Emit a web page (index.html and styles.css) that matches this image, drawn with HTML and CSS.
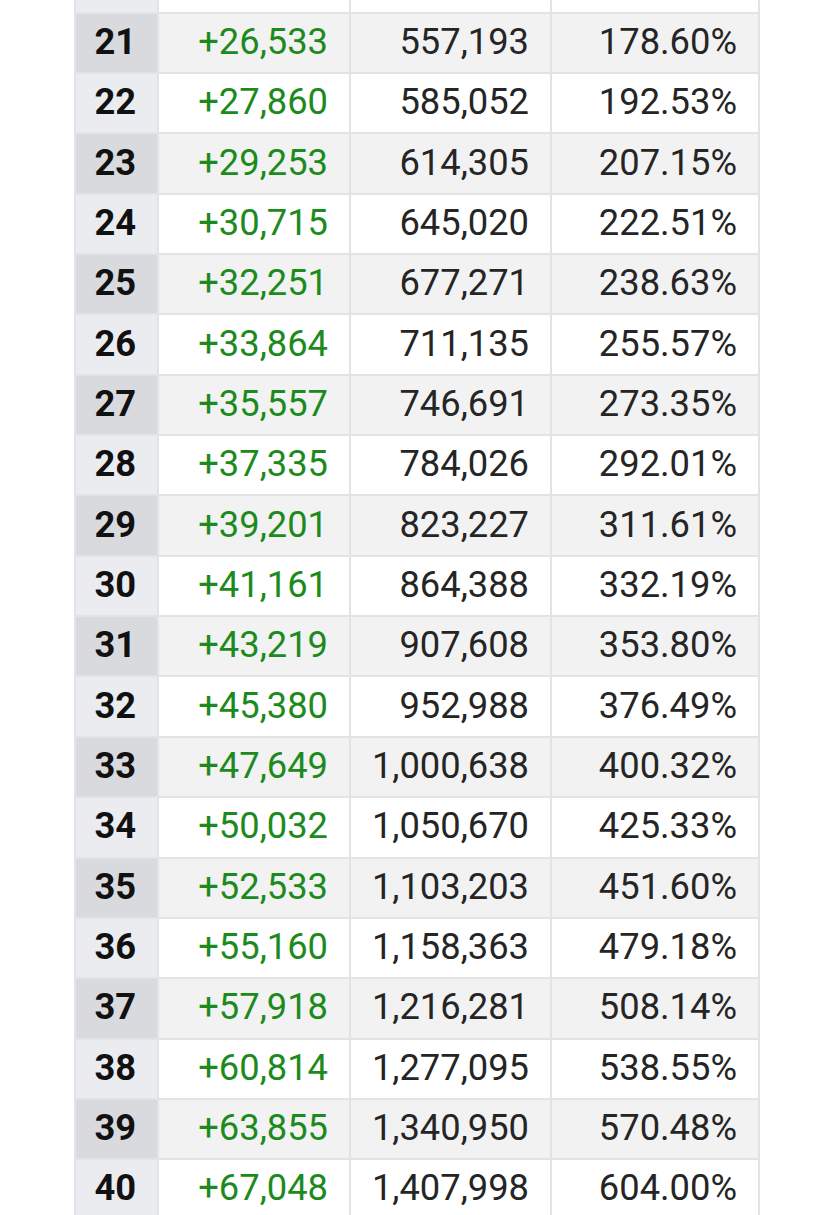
FILE: index.html
```html
<!DOCTYPE html>
<html>
<head>
<meta charset="utf-8">
<link rel="stylesheet" href="styles.css">
</head>
<body>
<div class="table">
  <div class="row even"><div class="c h"></div><div class="c g"></div><div class="c n"></div><div class="c p"></div></div>
  <div class="row odd"><div class="c h">21</div><div class="c g">+26,533</div><div class="c n">557,193</div><div class="c p">178.60%</div></div>
  <div class="row even"><div class="c h">22</div><div class="c g">+27,860</div><div class="c n">585,052</div><div class="c p">192.53%</div></div>
  <div class="row odd"><div class="c h">23</div><div class="c g">+29,253</div><div class="c n">614,305</div><div class="c p">207.15%</div></div>
  <div class="row even"><div class="c h">24</div><div class="c g">+30,715</div><div class="c n">645,020</div><div class="c p">222.51%</div></div>
  <div class="row odd"><div class="c h">25</div><div class="c g">+32,251</div><div class="c n">677,271</div><div class="c p">238.63%</div></div>
  <div class="row even"><div class="c h">26</div><div class="c g">+33,864</div><div class="c n">711,135</div><div class="c p">255.57%</div></div>
  <div class="row odd"><div class="c h">27</div><div class="c g">+35,557</div><div class="c n">746,691</div><div class="c p">273.35%</div></div>
  <div class="row even"><div class="c h">28</div><div class="c g">+37,335</div><div class="c n">784,026</div><div class="c p">292.01%</div></div>
  <div class="row odd"><div class="c h">29</div><div class="c g">+39,201</div><div class="c n">823,227</div><div class="c p">311.61%</div></div>
  <div class="row even"><div class="c h">30</div><div class="c g">+41,161</div><div class="c n">864,388</div><div class="c p">332.19%</div></div>
  <div class="row odd"><div class="c h">31</div><div class="c g">+43,219</div><div class="c n">907,608</div><div class="c p">353.80%</div></div>
  <div class="row even"><div class="c h">32</div><div class="c g">+45,380</div><div class="c n">952,988</div><div class="c p">376.49%</div></div>
  <div class="row odd"><div class="c h">33</div><div class="c g">+47,649</div><div class="c n">1,000,638</div><div class="c p">400.32%</div></div>
  <div class="row even"><div class="c h">34</div><div class="c g">+50,032</div><div class="c n">1,050,670</div><div class="c p">425.33%</div></div>
  <div class="row odd"><div class="c h">35</div><div class="c g">+52,533</div><div class="c n">1,103,203</div><div class="c p">451.60%</div></div>
  <div class="row even"><div class="c h">36</div><div class="c g">+55,160</div><div class="c n">1,158,363</div><div class="c p">479.18%</div></div>
  <div class="row odd"><div class="c h">37</div><div class="c g">+57,918</div><div class="c n">1,216,281</div><div class="c p">508.14%</div></div>
  <div class="row even"><div class="c h">38</div><div class="c g">+60,814</div><div class="c n">1,277,095</div><div class="c p">538.55%</div></div>
  <div class="row odd"><div class="c h">39</div><div class="c g">+63,855</div><div class="c n">1,340,950</div><div class="c p">570.48%</div></div>
  <div class="row even"><div class="c h">40</div><div class="c g">+67,048</div><div class="c n">1,407,998</div><div class="c p">604.00%</div></div>
</div>
</body>
</html>
```
FILE: styles.css
```css
html, body {
  margin: 0;
  padding: 0;
  background: #ffffff;
}
body {
  font-family: Roboto, "Noto Sans", sans-serif;
  overflow: hidden;
  height: 1215px;
}
.table {
  margin-top: -48.65px;
  margin-left: 74px;
  display: flex;
  flex-direction: column;
}
.row {
  display: flex;
  height: 60.35px;
}
.c {
  box-sizing: border-box;
  height: 100%;
  border-top: 2px solid #e1e3e7;
  border-left: 2px solid #e1e3e7;
  font-size: 36.3px;
  display: flex;
  align-items: center;
  justify-content: flex-end;
  padding-right: 21px;
  padding-bottom: 3px;
  color: #252525;
}
.h {
  width: 82.5px;
  justify-content: center;
  padding-right: 2px;
  font-weight: 700;
  color: #111111;
}
.g {
  width: 192.5px;
  color: #1c8a1c;
}
.n {
  width: 201px;
}
.p {
  width: 210px;
  border-right: 2px solid #e1e3e7;
}
.odd .c { background: #f2f2f3; }
.odd .h { background: #d9dadd; }
.even .c { background: #ffffff; }
.even .h { background: #eaecf0; }
```
